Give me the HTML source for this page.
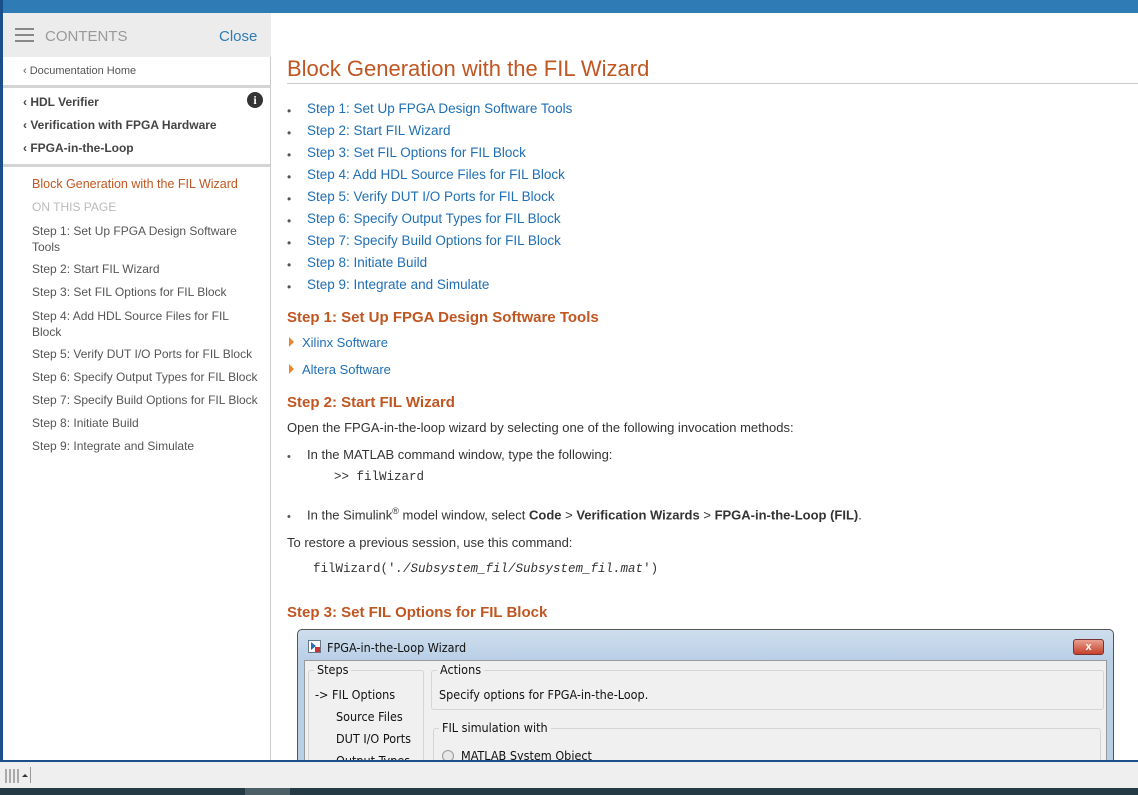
<!DOCTYPE html>
<html><head><meta charset="utf-8"><style>
*{margin:0;padding:0;box-sizing:border-box}
body{width:1138px;height:795px;overflow:hidden;background:#fff;font-family:"Liberation Sans",Arial,sans-serif;position:relative}
.a{position:absolute}
.top{left:0;top:0;width:1138px;height:13px;background:#2f7bb5}
.lb{left:0;top:0;width:3px;height:762px;background:#1a4f8c}
.side{left:3px;top:13px;width:268px;height:749px;background:#fff;border-right:1px solid #ccc}
.sh{left:3px;top:13px;width:268px;height:44px;background:#ececec}
.sep{left:3px;width:268px;height:3px;background:#d4d4d4}
.s{color:#555;font-size:12px}
.sb{color:#444;font-size:12px;font-weight:bold}
.lk{color:#1f6fb5;font-size:13px}
h1{position:absolute;left:287px;top:56px;font-weight:normal;font-size:22px;color:#c05621}
.hr{left:287px;top:83px;width:851px;height:1px;background:#ccc}
.li{left:287px;font-size:13.5px;color:#1f6fb5}
.li b{position:absolute;left:0;top:3px;color:#555;font-weight:normal;font-size:12px}
.li span{position:absolute;left:20px;white-space:nowrap}
.h2{left:287px;font-size:15px;font-weight:bold;color:#c05621}
.t{font-size:13px;color:#333;white-space:nowrap}
.m{font-family:"Liberation Mono",monospace;font-size:12.5px;color:#333}
.tri{width:0;height:0;border-left:5px solid #e8872e;border-top:5px solid transparent;border-bottom:5px solid transparent}
.w{font-family:"DejaVu Sans Condensed","Liberation Sans Narrow",sans-serif;font-size:12.5px;color:#111;white-space:nowrap}
</style></head><body>
<div class="a top"></div>
<div class="a side"></div>
<div class="a sh"></div>
<div class="a" style="left:15px;top:28px;width:19px;height:2px;background:#888;box-shadow:0 6px 0 #888,0 12px 0 #888"></div>
<div class="a" style="left:45px;top:28px;font-size:15px;color:#999">CONTENTS</div>
<div class="a" style="left:219px;top:28px;font-size:15px;color:#2f7bb5">Close</div>
<div class="a s" style="left:23px;top:65px;font-size:11px">‹ Documentation Home</div>
<div class="a sep" style="top:85px"></div>
<div class="a sb" style="left:23px;top:95px">‹ HDL Verifier</div>
<div class="a" style="left:247px;top:92px;width:16px;height:16px;border-radius:8px;background:#333;color:#fff;font-size:12px;font-weight:bold;text-align:center;line-height:16px;font-family:'Liberation Serif',serif">i</div>
<div class="a sb" style="left:23px;top:118px">‹ Verification with FPGA Hardware</div>
<div class="a sb" style="left:23px;top:141px">‹ FPGA-in-the-Loop</div>
<div class="a sep" style="top:164px"></div>
<div class="a" style="left:32px;top:177px;font-size:12.5px;color:#c05621">Block Generation with the FIL Wizard</div>
<div class="a" style="left:32px;top:200px;font-size:12px;color:#bbb">ON THIS PAGE</div>
<div class="a s" style="left:32px;top:223px;line-height:16px;width:225px">Step 1: Set Up FPGA Design Software Tools</div>
<div class="a s" style="left:32px;top:262px">Step 2: Start FIL Wizard</div>
<div class="a s" style="left:32px;top:285px">Step 3: Set FIL Options for FIL Block</div>
<div class="a s" style="left:32px;top:308px;line-height:16px;width:220px">Step 4: Add HDL Source Files for FIL Block</div>
<div class="a s" style="left:32px;top:347px">Step 5: Verify DUT I/O Ports for FIL Block</div>
<div class="a s" style="left:32px;top:370px">Step 6: Specify Output Types for FIL Block</div>
<div class="a s" style="left:32px;top:393px">Step 7: Specify Build Options for FIL Block</div>
<div class="a s" style="left:32px;top:416px">Step 8: Initiate Build</div>
<div class="a s" style="left:32px;top:439px">Step 9: Integrate and Simulate</div>
<div class="a lb"></div>

<h1>Block Generation with the FIL Wizard</h1>
<div class="a hr"></div>
<div class="a li" style="top:101px"><b>•</b><span>Step 1: Set Up FPGA Design Software Tools</span></div>
<div class="a li" style="top:123px"><b>•</b><span>Step 2: Start FIL Wizard</span></div>
<div class="a li" style="top:145px"><b>•</b><span>Step 3: Set FIL Options for FIL Block</span></div>
<div class="a li" style="top:167px"><b>•</b><span>Step 4: Add HDL Source Files for FIL Block</span></div>
<div class="a li" style="top:189px"><b>•</b><span>Step 5: Verify DUT I/O Ports for FIL Block</span></div>
<div class="a li" style="top:211px"><b>•</b><span>Step 6: Specify Output Types for FIL Block</span></div>
<div class="a li" style="top:233px"><b>•</b><span>Step 7: Specify Build Options for FIL Block</span></div>
<div class="a li" style="top:255px"><b>•</b><span>Step 8: Initiate Build</span></div>
<div class="a li" style="top:277px"><b>•</b><span>Step 9: Integrate and Simulate</span></div>
<div class="a h2" style="top:309px">Step 1: Set Up FPGA Design Software Tools</div>
<div class="a tri" style="left:289px;top:337px"></div><div class="a lk" style="left:302px;top:335px">Xilinx Software</div>
<div class="a tri" style="left:289px;top:364px"></div><div class="a lk" style="left:302px;top:362px">Altera Software</div>
<div class="a h2" style="top:394px">Step 2: Start FIL Wizard</div>
<div class="a t" style="left:287px;top:420px">Open the FPGA-in-the-loop wizard by selecting one of the following invocation methods:</div>
<div class="a t" style="left:287px;top:448px"><span style="font-size:11px;color:#555">•</span></div>
<div class="a t" style="left:307px;top:447px">In the MATLAB command window, type the following:</div>
<div class="a m" style="left:334px;top:470px">&gt;&gt; filWizard</div>
<div class="a t" style="left:287px;top:508px"><span style="font-size:11px;color:#555">•</span></div>
<div class="a t" style="left:307px;top:506px">In the Simulink<sup style="font-size:9px">®</sup> model window, select <b>Code</b> &gt; <b>Verification Wizards</b> &gt; <b>FPGA-in-the-Loop (FIL)</b>.</div>
<div class="a t" style="left:287px;top:535px">To restore a previous session, use this command:</div>
<div class="a m" style="left:313px;top:562px">filWizard('<i>./Subsystem_fil/Subsystem_fil.mat</i>')</div>
<div class="a h2" style="top:604px">Step 3: Set FIL Options for FIL Block</div>

<div class="a" style="left:297px;top:629px;width:817px;height:140px;border:1px solid #555;border-radius:5px 5px 0 0;background:linear-gradient(#cfdeee,#b9cfe6 30px)"></div>
<div class="a" style="left:308px;top:640px;width:13px;height:13px;background:#fff;border:1px solid #678"><div class="a" style="left:2px;top:1px;border-left:5px solid #2a6ebb;border-top:4px solid transparent;border-bottom:4px solid transparent"></div><div class="a" style="left:6px;top:6px;width:5px;height:5px;background:#c33"></div></div>
<div class="a w" style="left:327px;top:640px">FPGA-in-the-Loop Wizard</div>
<div class="a" style="left:1073px;top:639px;width:31px;height:16px;border:1px solid #733;border-radius:3px;background:linear-gradient(#e9a08f,#c4402c);color:#fff;font-size:11px;font-weight:bold;text-align:center;line-height:14px">x</div>
<div class="a" style="left:304px;top:660px;width:803px;height:110px;background:#f0f0f0;border:1px solid #999"></div>
<div class="a" style="left:308px;top:670px;width:116px;height:100px;border:1px solid #d5d5d5;border-radius:3px"></div>
<div class="a w" style="left:314px;top:662px;background:#f0f0f0;padding:0 3px">Steps</div>
<div class="a" style="left:431px;top:670px;width:673px;height:40px;border:1px solid #d5d5d5;border-radius:3px"></div>
<div class="a w" style="left:437px;top:662px;background:#f0f0f0;padding:0 3px">Actions</div>
<div class="a w" style="left:315px;top:687px">-&gt; FIL Options</div>
<div class="a w" style="left:336px;top:709px">Source Files</div>
<div class="a w" style="left:336px;top:731px">DUT I/O Ports</div>
<div class="a w" style="left:336px;top:753px">Output Types</div>
<div class="a w" style="left:439px;top:687px">Specify options for FPGA-in-the-Loop.</div>
<div class="a" style="left:433px;top:728px;width:668px;height:45px;border:1px solid #d5d5d5;border-radius:3px"></div>
<div class="a w" style="left:439px;top:720px;background:#f0f0f0;padding:0 3px">FIL simulation with</div>
<div class="a" style="left:442px;top:750px;width:12px;height:12px;border-radius:6px;border:1px solid #999;background:#e8e8e8"></div>
<div class="a w" style="left:461px;top:748px">MATLAB System Object</div>

<div class="a" style="left:0;top:760px;width:1138px;height:2px;background:#1a4f8c"></div>
<div class="a" style="left:0;top:762px;width:1138px;height:26px;background:#efefef"></div>
<div class="a" style="left:5px;top:769px;width:15px;height:14px;background:repeating-linear-gradient(90deg,#aaa 0 2px,transparent 2px 4px)"></div>
<div class="a" style="left:22px;top:774px;border-bottom:3px solid #333;border-left:3px solid transparent;border-right:3px solid transparent"></div>
<div class="a" style="left:30px;top:767px;width:1px;height:16px;background:#999"></div>
<div class="a" style="left:0;top:788px;width:1138px;height:7px;background:#243a44"></div>
<div class="a" style="left:245px;top:788px;width:45px;height:7px;background:#4c5e66"></div>
</body></html>
